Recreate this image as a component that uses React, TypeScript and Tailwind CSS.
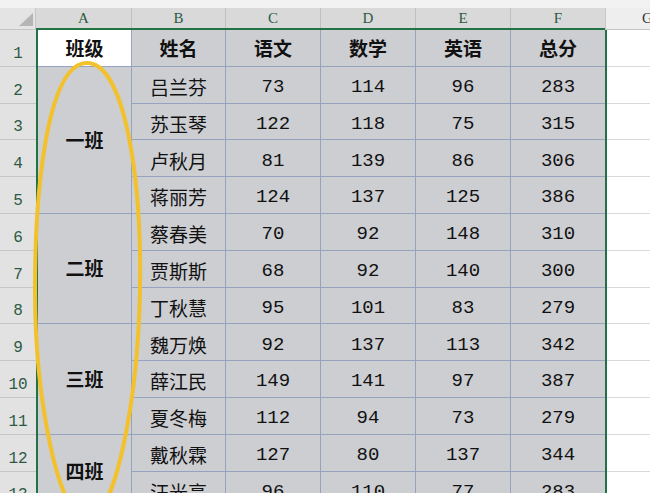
import React from "react";

const rows: [string, string, string, string, string][] = [
  ["吕兰芬", "73", "114", "96", "283"],
  ["苏玉琴", "122", "118", "75", "315"],
  ["卢秋月", "81", "139", "86", "306"],
  ["蒋丽芳", "124", "137", "125", "386"],
  ["蔡春美", "70", "92", "148", "310"],
  ["贾斯斯", "68", "92", "140", "300"],
  ["丁秋慧", "95", "101", "83", "279"],
  ["魏万焕", "92", "137", "113", "342"],
  ["薛江民", "149", "141", "97", "387"],
  ["夏冬梅", "112", "94", "73", "279"],
  ["戴秋霖", "127", "80", "137", "344"],
  ["汪光亮", "96", "110", "77", "283"],
];

const classes: Record<number, [string, string]> = {
  0: ["一班", "row-span-4"],
  4: ["二班", "row-span-3"],
  7: ["三班", "row-span-3"],
  10: ["四班", "row-span-2"],
};

const cjk = { fontFamily: '"Noto Sans CJK SC", "Noto Sans", sans-serif' };
const mono = { fontFamily: '"Liberation Mono", "DejaVu Sans Mono", monospace' };

const cellBase = "flex items-center justify-center border-b border-[#95a3c0] text-[#111]";

export default function App() {
  const heads = ["姓名", "语文", "数学", "英语", "总分"];
  const letters = [
    ["A", "w-[96px]"],
    ["B", "w-[94px]"],
    ["C", "w-[95px]"],
    ["D", "w-[95px]"],
    ["E", "w-[95px]"],
    ["F", "w-[94px]"],
  ];
  const cells: React.ReactNode[] = [];
  cells.push(
    <div key="a1" className={`${cellBase} border-r bg-white text-[19px] font-bold`} style={cjk}>
      班级
    </div>
  );
  heads.forEach((h, i) =>
    cells.push(
      <div
        key={"h" + i}
        className={`${cellBase} ${i < 4 ? "border-r" : ""} text-[19px] font-bold`}
        style={cjk}
      >
        {h}
      </div>
    )
  );
  rows.forEach((r, ri) => {
    const c = classes[ri];
    if (c) {
      cells.push(
        <div
          key={"c" + ri}
          className={`${cellBase} ${c[1]} border-r text-[19px] font-bold`}
          style={cjk}
        >
          {c[0]}
        </div>
      );
    }
    r.forEach((v, ci) =>
      cells.push(
        <div
          key={ri + "-" + ci}
          className={`${cellBase} ${ci < 4 ? "border-r" : ""} pt-[5px] text-[19px]`}
          style={ci === 0 ? cjk : mono}
        >
          {v}
        </div>
      )
    );
  });

  return (
    <div className="relative h-[493px] w-[650px] overflow-hidden bg-white">
      <div className="h-[8px] bg-[#f2f2f2]" />
      {/* column header */}
      <div className="flex h-[22px]">
        <div className="relative w-[36px] shrink-0 border-b border-r border-[#c6c6c6] bg-[#e4e4e4]">
          <svg className="absolute left-[19px] top-[5px]" width="14" height="13" viewBox="0 0 14 13">
            <polygon points="14,0 14,13 0,13" fill="#b5b5b5" />
          </svg>
        </div>
        <div className="flex shrink-0 border-b-2 border-[#217346] bg-[#d9d9d9]">
          {letters.map(([l, w], i) => (
            <div
              key={l}
              className={`${w} flex shrink-0 items-center justify-center ${i < 5 ? "border-r border-[#c0c0c0]" : ""} text-[15px] text-[#2e5a44]`}
              style={{ fontFamily: '"Liberation Serif", serif' }}
            >
              {l}
            </div>
          ))}
        </div>
        <div
          className="flex min-w-0 flex-1 items-center overflow-hidden border-b border-l border-[#c6c6c6] bg-[#eeeeee] pl-[36px] text-[15px] text-[#333]"
          style={{ fontFamily: '"Liberation Serif", serif' }}
        >
          G
        </div>
      </div>
      {/* body */}
      <div className="flex">
        <div className="w-[36px] shrink-0 bg-[#e2e2e2]">
          {Array.from({ length: 13 }).map((_, i) => (
            <div
              key={i}
              className="flex h-[36.8px] items-end justify-center border-b border-[#c6c6c6] pb-[3px] text-[16px] leading-[18px] text-[#2e5a44]"
              style={mono}
            >
              {i + 1}
            </div>
          ))}
        </div>
        <div className="shrink-0 border-x-2 border-[#217346] bg-[#cdced2]">
          <div className="grid grid-cols-[94px_94px_95px_95px_95px_94px] grid-rows-[repeat(13,36.8px)]">
            {cells}
          </div>
        </div>
        <div className="min-w-0 flex-1">
          {Array.from({ length: 13 }).map((_, i) => (
            <div key={i} className="h-[36.8px] border-b border-[#d9d9d9]" />
          ))}
        </div>
      </div>
      <svg className="pointer-events-none absolute left-0 top-0" width="650" height="493" viewBox="0 0 650 493">
        <path
          d="M 87 63 C 125 63, 142 180, 140 290 C 138 400, 115 520, 87 520 C 59 520, 35 400, 35 290 C 35 180, 49 63, 87 63 Z"
          fill="none"
          stroke="#f2c12b"
          strokeWidth="4"
        />
      </svg>
    </div>
  );
}
